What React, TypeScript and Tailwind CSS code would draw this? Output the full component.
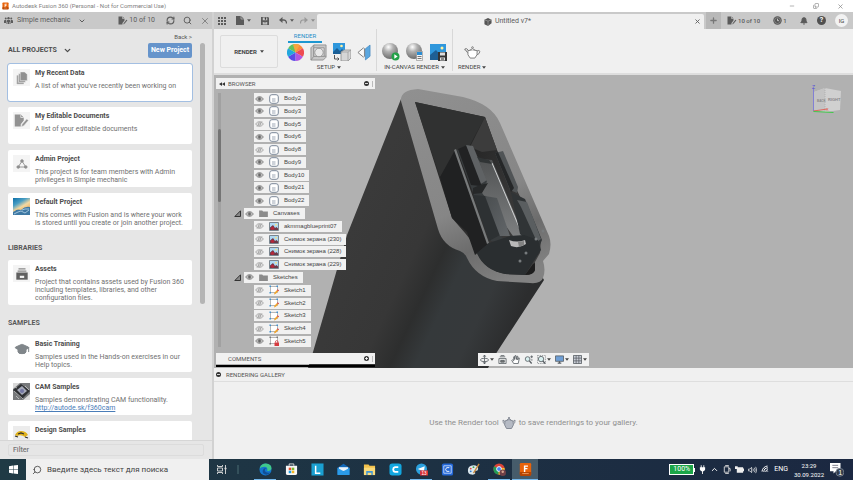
import React from 'react';
import clsx from 'clsx';
import {
  Bell, ChevronDown, ChevronUp, Copy as Restore, GraduationCap, Minus, Plus, RefreshCw, Search, Wifi, X,
} from 'lucide-react';

type IconProps = { className?: string };

const Caret = ({ className }: IconProps) => (
  <svg viewBox="0 0 6 4" className={clsx('w-1 h-[3px] shrink-0', className)}><path d="M0 0h6L3 4z" fill="currentColor" /></svg>
);

const PeopleIcon = () => (
  <svg viewBox="0 0 18 14" className="w-[9px] h-[7px]" fill="#5c5c5c">
    <circle cx="3.5" cy="3" r="2" /><circle cx="9" cy="2.5" r="2.4" /><circle cx="14.5" cy="3" r="2" />
    <path d="M0 12V8q0-2 2-2h2v6zM5 14V8q0-2 2-2h4q2 0 2 2v6h-2v-4h-1v4H8v-4H7v4zM14 12V6h2q2 0 2 2v4z" />
  </svg>
);

const EditDocIcon = ({ className }: IconProps) => (
  <svg viewBox="0 0 20 18" className={className}>
    <path d="M1 1h8l4 4v4l-4 5v3H1z" fill="currentColor" />
    <path d="M9 1v4h4" stroke="#eee" fill="none" strokeWidth="1" />
    <path d="M10 17l1-3 6-7 2 2-6 7z" fill="currentColor" stroke="#ddd" strokeWidth=".7" />
  </svg>
);

const ClockIcon = () => (
  <svg viewBox="0 0 10 10" className="w-[9px] h-[9px]">
    <circle cx="5" cy="5" r="4.700" fill="#555" /><circle cx="5" cy="5" r="3.300" fill="none" stroke="#aaa" strokeWidth=".6" />
    <path d="M5 3v2.200h1.700" stroke="#ddd" fill="none" strokeWidth=".9" />
  </svg>
);

const FusionIcon = ({ className }: IconProps) => (
  <svg viewBox="0 0 16 16" className={className}>
    <rect x="1" width="14" height="15" rx="1.5" fill="#e8630a" />
    <path d="M1 11h14v3q0 2-2 2H3q-2 0-2-2z" fill="#b54503" />
    <path d="M6 3h5v1.6H7.8v1.6h2.6v1.6H7.8V11H6z" fill="#fff" />
    <path d="M4 13h8" stroke="#f7a669" />
  </svg>
);

const CopyDocsIcon = () => (
  <svg viewBox="0 0 16 16" className="w-[14px] h-[14px]">
    <path d="M2 5h8v10H2z" fill="#a3a3a3" />
    <path d="M4 3h8v10H4z" fill="#9a9a9a" stroke="#f4f4f4" strokeWidth=".6" />
    <path d="M6 1h5l3 3v7H6z" fill="#909090" stroke="#f4f4f4" strokeWidth=".6" />
  </svg>
);

const ShareIcon = () => (
  <svg viewBox="0 0 16 16" className="w-3 h-3" fill="none" stroke="#8e8e8e">
    <path d="M8 4L3 12h10z" strokeWidth="1.2" />
    <g fill="#8e8e8e"><circle cx="8" cy="4" r="1.8" /><circle cx="3" cy="12" r="1.8" /><circle cx="13" cy="12" r="1.8" /></g>
  </svg>
);

const PhotoThumb = () => (
  <svg viewBox="0 0 17 17" className="w-[17px] h-[17px]">
    <defs>
      <linearGradient id="sky" x1="0" y1="0" x2=".6" y2="1">
        <stop offset="0" stopColor="#0d6fa8" /><stop offset=".35" stopColor="#4a9fc4" /><stop offset=".6" stopColor="#f2d8a2" /><stop offset="1" stopColor="#e9a24b" />
      </linearGradient>
    </defs>
    <rect width="17" height="17" fill="url(#sky)" />
    <path d="M0 14Q4 10 8 12Q12 8 17 9v8H0z" fill="#3e78a3" />
    <path d="M1 16l4-2 3-1 4 2 4-3M9 12l3-1 4 0" fill="none" stroke="#a9cbe2" strokeWidth=".9" />
    <path d="M1 13l3-2 3 0 3-2" stroke="#f3cb86" fill="none" />
  </svg>
);

const ArchiveIcon = () => (
  <svg viewBox="0 0 16 16" className="w-[14px] h-[14px]" fill="#5f5f5f">
    <path d="M4 1.500h8v1.300H4zM3 4h10v1.300H3z" fill="#888" />
    <path d="M1.500 6.300h13v8.200h-13z" /><path d="M5.500 10h5v2.500h-5z" fill="#f2f2f2" />
  </svg>
);

const CamThumb = () => (
  <svg viewBox="0 0 17 17" className="w-[17px] h-[17px]">
    <rect width="17" height="17" fill="#77797b" />
    <path d="M0 0h7L0 6zM10 17l7-6v6z" fill="#d9d9d9" />
    <path d="M0 7l8-6 9 7-8 8z" fill="#2f3134" />
    <path d="M4 7l5-4 5 5-5 4z" fill="#a5a9b8" /><circle cx="9" cy="8" r="2" fill="#7377a3" />
    <path d="M1 8l9 8M3 13l3 3M12 3l4 4M2 4l2 1" stroke="#c9c9c9" strokeWidth=".8" />
  </svg>
);

const DesignThumb = () => (
  <svg viewBox="0 0 17 17" className="w-[17px] h-[17px]">
    <rect width="17" height="17" fill="#ececec" />
    <path d="M2 9q2-4 6-4 5 0 7 4l-3 2q-4-3-8-1z" fill="#e0b21b" />
    <path d="M5 8l3-1 3 1M2 10l3 1M12 11l3 1" stroke="#2f2f2f" strokeWidth="1.200" fill="none" />
  </svg>
);

interface Project {
  title: string;
  lines: string[];
  icon: React.ReactNode;
  link?: string;
  selected?: boolean;
}

const projects: Project[] = [
  { title: 'My Recent Data', lines: ["A list of what you've recently been working on"], icon: <CopyDocsIcon />, selected: true },
  { title: 'My Editable Documents', lines: ['A list of your editable documents'], icon: <EditDocIcon className="w-[15px] h-[15px] text-[#929292]" /> },
  { title: 'Admin Project', lines: ['This project is for team members with Admin', 'privileges in Simple mechanic'], icon: <ShareIcon /> },
  { title: 'Default Project', lines: ['This comes with Fusion and is where your work', 'is stored until you create or join another project.'], icon: <PhotoThumb /> },
];

const libraries: Project[] = [
  { title: 'Assets', lines: ['Project that contains assets used by Fusion 360', 'including templates, libraries, and other', 'configuration files.'], icon: <ArchiveIcon /> },
];

const samples: Project[] = [
  { title: 'Basic Training', lines: ['Samples used in the Hands-on exercises in our', 'Help topics.'], icon: <GraduationCap className="w-4 h-4 text-[#80868a]" fill="#80868a" strokeWidth={1.5} /> },
  { title: 'CAM Samples', lines: ['Samples demonstrating CAM functionality.'], link: 'http://autode.sk/f360cam', icon: <CamThumb /> },
  { title: 'Design Samples', lines: [], icon: <DesignThumb /> },
];

const ProjectCard = ({ title, lines, icon, link, selected }: Project) => (
  <li className={clsx('flex items-start gap-[5px] min-h-[37px] pl-[5px] pt-[5px] pb-[3px] bg-white rounded-xs', selected && 'outline outline-[#a3bfe2]')}>
    <span className={clsx('w-[17px] h-[17px] shrink-0 flex items-center justify-center', title !== 'Basic Training' && 'bg-[#f4f4f4]')}>{icon}</span>
    <div className="min-w-0 leading-[8px] whitespace-nowrap">
      <h3 className="font-bold text-[#4c4c4c]">{title}</h3>
      <div className="mt-[5px] text-[#707070]">
        {lines.map((line) => <p key={line}>{line}</p>)}
        {link && <a href={link} className="underline text-[#4a7db8]">{link}</a>}
      </div>
    </div>
  </li>
);

const CardList = ({ items }: { items: Project[] }) => (
  <ul className="flex flex-col gap-[6px]">{items.map((p) => <ProjectCard key={p.title} {...p} />)}</ul>
);

const SectionTitle = ({ children }: { children: React.ReactNode }) => (
  <h2 className="mt-[14px] mb-[7px] leading-[9px] font-bold text-[#585858]">{children}</h2>
);

const DataPanel = () => (
  <aside className="w-[212px] shrink-0 flex flex-col min-h-0 bg-[#e6e6e6] font-[Roboto,sans-serif] text-[7px]">
    <header className="h-[17px] shrink-0 flex items-center pl-1 pr-[2px] bg-[#c9c9c9] text-[#5c5c5c]">
      <button className="flex items-center gap-1"><PeopleIcon />Simple mechanic<ChevronDown className="ml-[3px] w-2 h-2" strokeWidth={3} /></button>
      <span className="ml-auto flex items-center gap-px"><EditDocIcon className="w-[10px] h-[9px]" />10 of 10</span>
      <button aria-label="Refresh" className="ml-[11px]"><RefreshCw className="w-[9px] h-[9px]" strokeWidth={3} /></button>
      <button aria-label="Search" className="ml-2"><Search className="w-[9px] h-[9px]" strokeWidth={2.5} /></button>
      <button aria-label="Close panel" className="ml-2"><X className="w-[10px] h-[10px]" strokeWidth={1.5} /></button>
    </header>
    <div className="flex-1 min-h-0 flex overflow-hidden border-b border-[#d6d6d6]">
      <div className="flex-1 pl-2">
        <div className="h-[14px] flex items-center justify-end"><button className="text-[6px] text-[#555]">Back &gt;</button></div>
        <div className="h-[15px] mb-[6px] flex items-center">
          <button className="flex items-center gap-[6px] text-[7px] font-bold text-[#4c4c4c]">ALL PROJECTS<ChevronDown className="w-[9px] h-[9px]" strokeWidth={3.5} /></button>
          <button className="ml-auto w-[44px] h-[15px] rounded-xs bg-[#6694cb] text-white text-[7px] font-bold">New Project</button>
        </div>
        <CardList items={projects} />
        <SectionTitle>LIBRARIES</SectionTitle>
        <CardList items={libraries} />
        <SectionTitle>SAMPLES</SectionTitle>
        <CardList items={samples} />
      </div>
      <div className="w-5 pt-[14px] pl-2"><div className="w-[5px] h-[261px] rounded-full bg-[#b4b4b4]" /></div>
    </div>
    <div className="h-[18px] shrink-0 pl-2 pr-2 pt-[3px]">
      <input aria-label="Filter" placeholder="Filter" className="block w-full h-3 px-1 rounded-xs border border-[#dcdcdc] font-medium text-[7px] placeholder:text-[#757575]" />
    </div>
  </aside>
);

const TopTabs = () => (
  <div className="h-[17px] shrink-0 flex bg-[#c9c9c9] text-[#5a5a5a]">
    <div className="w-[103px] shrink-0 flex items-center pl-1 gap-[10px]">
      <button aria-label="Apps">
        <svg viewBox="0 0 8 8" className="w-2 h-2" fill="#5a5a5a"><path d="M0 0h2v2H0zM3 0h2v2H3zM6 0h2v2H6zM0 3h2v2H0zM3 3h2v2H3zM6 3h2v2H6zM0 6h2v2H0zM3 6h2v2H3zM6 6h2v2H6z" /></svg>
      </button>
      <button aria-label="File" className="flex items-center gap-[3px]">
        <svg viewBox="0 0 8 9" className="w-2 h-[9px]"><path d="M0 0h5l3 3v6H0z" fill="#5a5a5a" /><path d="M5 0v3h3" stroke="#ccc" fill="none" strokeWidth=".6" /></svg><Caret />
      </button>
      <button aria-label="Save">
        <svg viewBox="0 0 9 9" className="w-2 h-2"><path d="M0 0h8l1 1v8H0z" fill="#5a5a5a" /><path d="M2 .6h5v3H2zM2 5.500h5v3H2z" fill="#c9c9c9" /><path d="M3 6.500h3M4.500.8h1v2h-1z" stroke="#5a5a5a" strokeWidth=".7" /></svg>
      </button>
      <button aria-label="Undo" className="flex items-center gap-[3px]">
        <svg viewBox="0 0 8 7" className="w-2 h-[7px]"><path d="M1 3h4q2.500 0 2.500 3.500" stroke="#5a5a5a" fill="none" strokeWidth="1.300" /><path d="M3.500 0v6L0 3z" fill="#5a5a5a" /></svg><Caret />
      </button>
      <button aria-label="Redo" className="-ml-1 flex items-center gap-[3px] text-[#8c8c8c]">
        <svg viewBox="0 0 8 7" className="w-2 h-[7px]"><path d="M7 3H3Q.5 3 .5 6.500" stroke="#999" fill="none" strokeWidth="1.200" /><path d="M4.500 0v6L8 3z" fill="#999" /></svg><Caret />
      </button>
    </div>
    <div className="flex-1 flex items-center mt-[2px] bg-[#f0f0f0] rounded-t-xs">
      <span className="flex-1 flex items-center justify-center gap-[3px] pl-1 text-[7px] font-[Roboto,sans-serif]">
        <svg viewBox="0 0 8 9" className="w-2 h-2"><path d="M0 2l4-2 4 2v4L4 9 0 7z" fill="#555" /><path d="M0 2l4 1.500V9M4 3.500L8 2" stroke="#aaa" fill="none" strokeWidth=".7" /></svg>
        Untitled v7*
      </span>
      <button aria-label="Close tab" className="mr-[3px]"><X className="w-[7px] h-[7px]" strokeWidth={3} /></button>
    </div>
    <div className="w-[149px] shrink-0 flex items-center pl-[2px] font-[Roboto,sans-serif] text-[6px]">
      <button aria-label="New tab" className="w-[15px] h-full flex items-center justify-center bg-[#b8b8b8]"><Plus className="w-[9px] h-[9px] text-[#777]" strokeWidth={3.5} /></button>
      <span className="ml-[6px] flex items-center gap-px font-medium"><EditDocIcon className="w-[10px] h-[9px]" />10 of 10</span>
      <span className="ml-[13px] flex items-center gap-px font-medium"><ClockIcon />1</span>
      <div className="ml-auto mr-[5px] flex items-center gap-[9px]">
        <button aria-label="Notifications"><Bell className="w-2 h-2" fill="currentColor" strokeWidth={3} /></button>
        <button aria-label="Help" className="w-[9px] h-[9px] rounded-full bg-[#505050] text-white text-[7px] leading-[9px] font-bold">?</button>
        <button className="w-[13px] h-[13px] rounded-full bg-[#f2f2f2] text-[6px] leading-[13px] text-[#444]">IG</button>
      </div>
    </div>
  </div>
);

const ColorWheel = () => (
  <svg viewBox="-10 -10 20 20" className="w-[17px] h-[17px]">
    <path d="M0 0L0-10A10 10 0 0 1 8.700-5z" fill="#fb8a3c" /><path d="M0 0L8.700-5A10 10 0 0 1 8.700 5z" fill="#ee4b52" />
    <path d="M0 0L8.700 5A10 10 0 0 1 0 10z" fill="#b355e0" /><path d="M0 0L0 10A10 10 0 0 1-8.700 5z" fill="#5a4be6" />
    <path d="M0 0L-8.700 5A10 10 0 0 1-8.700-5z" fill="#23a7dd" /><path d="M0 0L-8.700-5A10 10 0 0 1 0-10z" fill="#62c35c" />
    <path d="M0 0L-3-9.500A10 10 0 0 1 5-8.700z" fill="#f6a53f" />
  </svg>
);

const SceneIcon = () => (
  <svg viewBox="0 0 18 18" className="w-[17px] h-[17px]" stroke="#8c8c8c" strokeWidth=".9">
    <path d="M1 4l3-3h13v13l-3 3H1z" fill="#c8c8c8" /><path d="M4 1v12l-3 4M4 13h13" fill="none" /><path d="M4 4h11v9H4z" fill="#e0e0e0" />
    <circle cx="9.500" cy="9" r="4.500" fill="#e8e8e8" />
  </svg>
);

const DecalIcon = () => (
  <svg viewBox="0 0 18 18" className="w-[18px] h-[18px]">
    <path d="M0 0h12v11H0z" fill="#2f97dc" /><path d="M0 9l4-4 3 3 2-2 3 3v2H0z" fill="#1b5f96" /><circle cx="8.500" cy="3" r="1.300" fill="#fff2a0" />
    <path d="M8 9l3-2h7v8l-3 3H8z" fill="#d6d6d6" stroke="#8b8b8b" strokeWidth=".8" /><path d="M8 9h7v9M15 9l3-2" stroke="#999" fill="none" strokeWidth=".7" />
    <path d="M1.500 12v4H6M4.500 14.500L6 16l-1.500 1.500" stroke="#555" fill="none" />
  </svg>
);

const TextureIcon = () => (
  <svg viewBox="0 0 15 18" className="w-[14px] h-[17px]">
    <path d="M1 9l6-5 1 1v8l-1 1z" fill="#fafafa" stroke="#7a7a7a" /><path d="M9 5l5-4v12l-5 4z" fill="#5aa7e0" stroke="#3f84bd" strokeWidth=".7" />
  </svg>
);

const Sphere = ({ children }: { children: React.ReactNode }) => (
  <svg viewBox="0 0 18 18" className="w-[18px] h-[18px]">
    <defs><radialGradient id="ball" cx=".4" cy=".25" r=".75"><stop offset="0" stopColor="#fff" /><stop offset=".4" stopColor="#b0b0b0" /><stop offset="1" stopColor="#6c6c6c" /></radialGradient></defs>
    <circle cx="8" cy="8" r="8" fill="url(#ball)" />{children}
  </svg>
);

const CaptureIcon = () => (
  <svg viewBox="0 0 17 18" className="w-[17px] h-[18px]">
    <path d="M0 1h16v16H0z" fill="#2f97dc" /><path d="M0 12l6-5 5 6v4H0z" fill="#1e5f94" /><circle cx="12" cy="5" r="1.500" fill="#fff2a0" />
    <path d="M8 9h9v9H8z" fill="#333" /><path d="M10 9.500h5v3h-5zM10 14.500h5v3h-5z" fill="#ddd" /><path d="M11 16h3" stroke="#333" />
  </svg>
);

const TeapotIcon = () => (
  <svg viewBox="0 0 18 14" className="w-[17px] h-[13px]" fill="#fff" stroke="#777" strokeWidth="1">
    <path d="M5 8Q2.500 7 2 4.500L.7 4.300 1 3h2l2 2.500" /><path d="M13.500 5.500q3-1.500 3.500.3 0 2.700-4 4.200" fill="none" />
    <path d="M4 5q5-1.500 10 0 1 5-2.500 8h-5Q3 10 4 5z" /><path d="M6 4.500q3-3 6 0" /><circle cx="9" cy="1.700" r=".9" />
  </svg>
);

const ToolGroup = ({ label, children }: { label: string; children: React.ReactNode }) => (
  <div className="flex flex-col items-center pt-[13px] px-[5px]">
    <div className="h-5 flex items-center gap-[6px]">{children}</div>
    <button className="flex items-center gap-[2px] font-[Roboto,sans-serif] text-[6px] leading-[10px] text-[#444]">{label}<Caret /></button>
  </div>
);

const Toolbar = () => (
  <div className="h-[46px] shrink-0 flex bg-[#f0f0f0] border-b-2 border-[#dedede]">
    <button className="ml-[6px] mt-[6px] w-[58px] h-[33px] rounded-xs border border-[#dcdcdc] flex items-center justify-center gap-[3px] font-[Roboto,sans-serif] text-[6px] font-bold text-[#444]">RENDER<Caret /></button>
    <div className="relative ml-[4px] border-r border-[#d8d8d8] h-[42px]">
      <button className="absolute left-[6px] top-[2px] w-[34px] border-b-2 border-[#1d97d1] font-[Roboto,sans-serif] text-[6px] leading-[10px] text-[#1d8fc9]">RENDER</button>
      <ToolGroup label="SETUP"><ColorWheel /><SceneIcon /><DecalIcon /><TextureIcon /></ToolGroup>
    </div>
    <div className="border-r border-[#d8d8d8] h-[42px]">
      <ToolGroup label="IN-CANVAS RENDER">
        <Sphere><circle cx="13.500" cy="13.500" r="4" fill="#24a148" /><path d="M12.300 11.300v4.400l3.400-2.200z" fill="#fff" /></Sphere>
        <Sphere><path d="M10.500 8.500h6v9h-6z" fill="#f5f5f5" stroke="#888" strokeWidth=".6" /><path d="M11 9h5v3h-5z" fill="#2b8ed4" /><path d="M11.500 13.500h4M11.500 15.500h4" stroke="#555" strokeWidth=".8" /></Sphere>
        <CaptureIcon />
      </ToolGroup>
    </div>
    <ToolGroup label="RENDER"><TeapotIcon /></ToolGroup>
  </div>
);

const Model = () => (
  <svg viewBox="214 75 639 293" preserveAspectRatio="xMinYMin slice" className="absolute inset-0 w-full h-full">
    <defs>
      <linearGradient id="side" gradientUnits="userSpaceOnUse" x1="350" y1="230" x2="520" y2="310">
        <stop offset="0" stopColor="#3a3a3a" /><stop offset=".36" stopColor="#373737" /><stop offset=".5" stopColor="#2d2e2e" /><stop offset=".62" stopColor="#35393b" /><stop offset=".82" stopColor="#36393b" /><stop offset="1" stopColor="#2c2d2e" />
      </linearGradient>
      <linearGradient id="rim" gradientUnits="userSpaceOnUse" x1="410" y1="90" x2="500" y2="285"><stop offset="0" stopColor="#909090" /><stop offset=".6" stopColor="#868686" /><stop offset=".8" stopColor="#6c6c6c" /><stop offset="1" stopColor="#828282" /></linearGradient>
      <linearGradient id="hole" x1="0" y1="0" x2="1" y2=".6"><stop offset="0" stopColor="#353535" /><stop offset=".45" stopColor="#262626" /><stop offset="1" stopColor="#404040" /></linearGradient>
      <linearGradient id="plate" x1="0" y1="0" x2="0" y2="1"><stop offset="0" stopColor="#505253" /><stop offset="1" stopColor="#7d7f80" /></linearGradient>
      <linearGradient id="block" x1="0" y1="0" x2="1" y2="1"><stop offset="0" stopColor="#4a4e50" /><stop offset="1" stopColor="#63676a" /></linearGradient>
    </defs>
    <path d="M401 99L347 235L313 352L308 368H488L497 352L544 280L500 200L425 98z" fill="url(#side)" />
    <path d="M401 101Q400 90 418 89L463 97Q492 104 500 123L549 236Q552 244 549 254L543 261Q546 270 543 278Q541 284 530 283L497 281Q476 277 467 258Q465 253 460 251Q443 246 438 229z" fill="url(#rim)" />
    <path d="M415 102L485 117L497 150L541 239L540 253L535 262L535 270Q533 275 525 275L505 274Q484 270 477 253Q473 242 465 233L452 218z" fill="url(#hole)" />
    <path d="M415 102L485 117L470 145L440 177z" fill="#303131" />
    <path d="M485 117L497 150L482 152L470 147z" fill="#3c3c3c" />
    <path d="M455 150L440 177L452 218L467 232L475 255L488 244z" fill="#202122" />
    <path d="M457 150L467 145L488 180L486 196L505 244L491 241z" fill="#383c3e" />
    <path d="M454 150L456 149L489 243L487 244z" fill="#777a7b" />
    <path d="M458 149L467 145L485 180L480 186L471 185z" fill="#212223" />
    <path d="M466 145L473 146L487 180L481 184z" fill="#5f6264" />
    <path d="M478 159L492 160L524 236L513 236L480 190L487 182z" fill="url(#plate)" />
    <path d="M492 163L522 234" stroke="#d0d2d3" strokeWidth="1" />
    <path d="M477 157L489 160L492 164L480 162z" fill="#303435" />
    <path d="M473 195L486 196L500 235L489 241z" fill="#2d3133" />
    <path d="M485 196L497 198L510 236L500 236z" fill="url(#block)" />
    <path d="M473 188L480 185L488 183L482 193L473 194z" fill="#262829" />
    <path d="M495 153L503 151L518 187L517 193L510 190z" fill="#505456" />
    <path d="M495 153L498 152L514 188L511 192z" fill="#252728" />
    <path d="M511 192L525 199L542 240L538 249L520 234z" fill="#303436" />
    <path d="M517 200L527 202L541 239L537 242L521 207z" fill="#5a5e60" />
    <path d="M489 243L510 236L524 235L538 240L541 250L525 275L505 274Q484 270 477 253z" fill="#2a2e30" />
    <path d="M533 264L535 263V270Q534 275 525 275z" fill="#1d1d1d" />
    <path d="M509 240Q517 243 525 240L526 244Q519 249 511 246z" fill="#b9b9b9" /><path d="M518 242L524 241L524 245L519 247z" fill="#828282" />
    <g fill="#777b7d"><circle cx="520" cy="261" r="1.500" /><circle cx="526" cy="253" r="1.500" /><circle cx="536" cy="239" r="1.500" /><circle cx="543" cy="231" r="1.500" /></g>
  </svg>
);

const Eye = ({ off }: { off?: boolean }) => (
  <svg viewBox="0 0 16 10" className="w-[9px] h-[6px] shrink-0" fill="none" stroke={off ? '#a2a2a2' : '#808080'} strokeWidth="1.600">
    <path d="M1 5q7-8.500 14 0-7 8.500-14 0z" fill={off ? '#eee' : '#c9c9c9'} /><circle cx="8" cy="5" r="2.500" fill={off ? 'none' : '#666'} />
    {off && <path d="M3 9.500L13 .5" />}
  </svg>
);

const treeIcons = {
  body: (
    <svg viewBox="0 0 10 10" className="w-[10px] h-[10px]"><rect x=".7" y=".7" width="8.600" height="8.600" rx="2.200" fill="#fff" stroke="#7b8798" /><path d="M3 4h3.500v4H3z" fill="#ced3da" /></svg>
  ),
  canvas: (
    <svg viewBox="0 0 10 9" className="w-[10px] h-[9px]"><path d="M.5.5h9v8h-9z" fill="#aed7f2" stroke="#7b868f" /><circle cx="7" cy="2.700" r="1" fill="#f4e38b" /><path d="M1 8V5.500L4 3l2 3 1.500-1L9 6.500V8z" fill="#6b3a48" /><circle cx="3.500" cy="6.300" r="1.700" fill="#b3273a" /></svg>
  ),
  sketch: (
    <svg viewBox="0 0 10 10" className="w-[10px] h-[10px]"><path d="M1.500 1.500h7v6h-7z" fill="#fff" stroke="#9a9a9a" strokeWidth=".7" /><path d="M.5.5H2V2H.5zM7.500.5H9V2H7.500zM.5 7H2v1.500H.5z" fill="#3d8fd0" /><path d="M5 9.500l.6-2L8 5l1.300 1.200-2.500 2.500z" fill="#f0a52c" /><path d="M8 5l.7-.8L10 5.500l-.7.7z" fill="#d8323c" /></svg>
  ),
  locked: (
    <svg viewBox="0 0 10 10" className="w-[10px] h-[10px]"><path d="M1.500 1.500h7v6h-7z" fill="#fff" stroke="#9a9a9a" strokeWidth=".7" /><path d="M.5.5H2V2H.5zM7.500.5H9V2H7.500zM.5 7H2v1.500H.5z" fill="#777" /><path d="M5.500 6.500H10V10H5.500z" fill="#d63a3f" /><path d="M6.500 6.500V5.200q1.200-1.200 2.400 0v1.300" stroke="#d63a3f" fill="none" strokeWidth=".8" /></svg>
  ),
  folder: (
    <svg viewBox="0 0 10 8" className="w-[9px] h-[7px]"><path d="M0 .5h3.500l1 1.200H10V8H0z" fill="#8b8b8b" /></svg>
  ),
};

interface TreeNode { name: string; kind: keyof typeof treeIcons; off?: boolean }

const tree: TreeNode[] = [
  { name: 'Body2', kind: 'body' },
  { name: 'Body3', kind: 'body' },
  { name: 'Body5', kind: 'body', off: true },
  { name: 'Body6', kind: 'body' },
  { name: 'Body8', kind: 'body', off: true },
  { name: 'Body9', kind: 'body' },
  { name: 'Body10', kind: 'body' },
  { name: 'Body21', kind: 'body' },
  { name: 'Body22', kind: 'body' },
  { name: 'Canvases', kind: 'folder' },
  { name: 'akmmagblueprint07', kind: 'canvas', off: true },
  { name: 'Снимок экрана (230)', kind: 'canvas', off: true },
  { name: 'Снимок экрана (228)', kind: 'canvas', off: true },
  { name: 'Снимок экрана (229)', kind: 'canvas', off: true },
  { name: 'Sketches', kind: 'folder' },
  { name: 'Sketch1', kind: 'sketch', off: true },
  { name: 'Sketch2', kind: 'sketch', off: true },
  { name: 'Sketch3', kind: 'sketch', off: true },
  { name: 'Sketch4', kind: 'sketch', off: true },
  { name: 'Sketch5', kind: 'locked' },
];

const TreeRow = ({ name, kind, off }: TreeNode) => {
  const folder = kind === 'folder';
  return (
    <li className={clsx('flex items-center', folder ? 'pl-[13px]' : 'pl-[33px]')}>
      {folder && <svg viewBox="0 0 7 7" className="w-[7px] h-[7px] mr-[3px]"><path d="M6.500.8v5.700H.8z" fill="#888" stroke="#333" /></svg>}
      <div className="h-[11px] flex items-center pl-px pr-[5px] bg-[#f1f1f1] text-[6px] text-[#444] whitespace-nowrap">
        <Eye off={off} />
        <span className="mx-[4px] w-[11px] flex justify-center">{treeIcons[kind]}</span>
        <span className={clsx(!folder && 'pl-px')}>{name}</span>
      </div>
    </li>
  );
};

const PanelBar = ({ label, sign }: { label: string; sign: string }) => (
  <div className="w-[159px] h-[11px] shrink-0 flex items-center bg-[#f1f1f1] pl-[3px] font-[Roboto,sans-serif] text-[6px] text-[#555]">
    <svg viewBox="0 0 8 5" className={clsx('w-[6px] h-1 mr-[3px]', sign === '+' && 'invisible')}><path d="M4 0v5L0 2.500zM8 0v5L4 2.500z" fill="#333" /></svg>
    {label}
    <button aria-label={label} className="ml-auto mr-[3px] w-[5px] h-[5px] rounded-full bg-[#333] flex items-center justify-center">
      <svg viewBox="0 0 5 5" className="w-[5px] h-[5px]" stroke="#fff" strokeWidth=".8"><path d={sign === '+' ? 'M1 2.500h3M2.500 1v3' : 'M1 2.500h3'} /></svg>
    </button>
    <span className="w-px h-[6px] mr-[2px] bg-[#bbb]" />
  </div>
);

const ViewCube = () => (
  <svg viewBox="0 0 34 32" className="absolute right-[9px] top-[9px] w-[34px] h-8">
    <path d="M4 8l11-4 16 3-1 19-15 2-11-2z" fill="#d0d0d0" /><path d="M4 8l11-4v24L4 26z" fill="#c4c4c4" /><path d="M15 4v24" stroke="#aaa" strokeWidth=".7" strokeDasharray="1 1" />
    <path d="M3.500 4v23" stroke="#7d7ad8" strokeWidth=".9" /><path d="M3.500 27l14-2" stroke="#e05a50" strokeWidth=".9" /><path d="M3.500 27.500l20 1" stroke="#41c94a" />
    <text x="2" y="5" fontSize="5" fill="#5854d6" fontFamily="Liberation Sans, sans-serif">Z</text>
    <text x="7" y="18" fontSize="3" fontWeight="700" fill="#888" fontFamily="Liberation Sans, sans-serif">BACK</text>
    <text x="18" y="17" fontSize="4" fontWeight="700" fill="#888" fontFamily="Liberation Sans, sans-serif">RIGHT</text>
    <text x="16" y="27" fontSize="4" fill="#e05a50" fontFamily="Liberation Sans, sans-serif">X</text>
  </svg>
);

const navIcons: { label: string; menu?: boolean; art: React.ReactNode }[] = [
  { label: 'Orbit', menu: true, art: <><path d="M5 0v10M3.500 2L5 0l1.500 2M3.500 8L5 10l1.500-2" /><ellipse cx="5" cy="5.500" rx="4.500" ry="1.900" /></> },
  { label: 'Look at', art: <><path d="M1 4h8v5.500H1zM2 2h6M3 .5h4" /><path d="M3 6h4v2H3z" fill="#777" /></> },
  { label: 'Pan', art: <path d="M3 9.500L.8 6l.8-.6L3 6.500V2l1-.2V5L4.500.7h1L6 5l.6-3.800 1 .3L7.400 5.500 8.500 3l.8.4L8 9.500z" fill="#fff" /> },
  { label: 'Zoom', art: <><circle cx="4" cy="4.500" r="2.600" fill="#d8efef" /><path d="M6 6.500L8.500 9.500" strokeWidth="1.500" /><path d="M7 2h3M8.500.5v3M7.500 5.500h2" /></> },
  { label: 'Fit', menu: true, art: <><path d="M.5.5h9v9h-9z" strokeDasharray="1.500 1" strokeWidth=".6" /><circle cx="4.500" cy="4.500" r="3" fill="#d8efef" /><path d="M6.500 6.500L9 9.500" strokeWidth="1.500" /></> },
  { label: 'Display settings', menu: true, art: <><path d="M.5 1h9v6h-9z" fill="#6f9fd6" /><path d="M3 9h4M5 7v2" strokeWidth="1.300" /></> },
  { label: 'Grid', menu: true, art: <><path d="M.5.5h9v9h-9z" fill="#c9cdd6" /><path d="M3.500.5v9M6.500.5v9M.5 3.500h9M.5 6.500h9" strokeWidth=".8" /></> },
];

const NavBar = () => (
  <div className="absolute left-[264px] bottom-[2px] h-[13px] px-[2px] flex items-center gap-[4px] bg-[#f1f1f1] text-[#444]">
    {navIcons.map(({ label, menu, art }) => (
      <button key={label} aria-label={label} className="flex items-center gap-px">
        <svg viewBox="0 0 10 10" className="w-[9px] h-[9px]" fill="none" stroke="#555b60" strokeWidth=".9">{art}</svg>
        {menu && <Caret />}
      </button>
    ))}
  </div>
);

const Viewport = () => (
  <section className="relative flex-1 min-h-0 overflow-hidden flex bg-[#b1b1b1]">
    <Model />
    <div className="relative flex-1 flex flex-col pt-[3px] pl-[2px]">
      <PanelBar label="BROWSER" sign="-" />
      <div className="flex-1 min-h-0 flex mt-1 mb-[6px]">
        <div className="w-[3px] ml-[2px] bg-[#a1a1a1]"><div className="mt-9 h-[73px] rounded-full bg-[#747474]" /></div>
        <ul className="flex-1 flex flex-col justify-between">{tree.map((n) => <TreeRow key={n.name} {...n} />)}</ul>
      </div>
      <PanelBar label="COMMENTS" sign="+" />
      <div className="w-[159px] h-[2px] mt-px mb-px bg-black" />
    </div>
    <ViewCube />
    <NavBar />
  </section>
);

const Gallery = () => (
  <section className="h-[91px] shrink-0 flex flex-col bg-[#f0f0f0] font-[Roboto,sans-serif]">
    <h2 className="h-[14px] shrink-0 flex items-center gap-[5px] pl-[2px] border-b border-[#dedede] text-[6px] text-[#555]">
      <svg viewBox="0 0 5 5" className="w-[5px] h-[5px]"><circle cx="2.500" cy="2.500" r="2.500" fill="#333" /><path d="M1 2.500h3" stroke="#fff" strokeWidth=".8" /></svg>
      RENDERING GALLERY
    </h2>
    <p className="flex-1 flex items-center justify-center gap-[3px] pt-1 text-[8px] text-[#8f8f8f]">
      Use the Render tool
      <svg viewBox="0 0 14 12" className="w-[14px] h-3" fill="#b5bac4" stroke="#858b96"><path d="M3 4.500L1 3q-.8 3 2.500 5M11 4.500L13 3q.8 3-2.500 5" fill="none" /><path d="M3 4q4-3 8 0 1.500 4-1.500 7.500h-5Q1.500 8 3 4z" /><path d="M5 2.800Q7 1 9 2.800" fill="#dde0e6" /><circle cx="7" cy="1" r=".7" /></svg>
      to save renderings to your gallery.
    </p>
  </section>
);

const taskApps: { name: string; running?: boolean; art: React.ReactNode }[] = [
  { name: 'Edge', running: true, art: <><circle cx="7" cy="7" r="6.500" fill="#1477cf" /><path d="M.7 6Q2 .5 7.500.5 13.500 1 13.500 6q-.5 3-4.500 2.500Q9.500 4 6 4 2 4 .7 6z" fill="#3fc98b" /><path d="M8.500 5.500q-3 .5-2 3.500 1.500 2.500 6 1-2 3-5.500 2.500-3.500-1-3-4.500 1-3 4.500-2.500z" fill="#103f7c" opacity=".7" /></> },
  { name: 'Store', art: <><path d="M1 3h12v8q0 2-2 2H3q-2 0-2-2z" fill="#f7f7f7" /><path d="M4.500 3V1h5v2" stroke="#ddd" fill="none" /><path d="M4 5h2.700v2.700H4z" fill="#e8502b" /><path d="M7.300 5H10v2.700H7.300z" fill="#7cb82f" /><path d="M4 8.300h2.700V11H4z" fill="#1e9de3" /><path d="M7.300 8.300H10V11H7.300z" fill="#f6b51e" /></> },
  { name: 'L', art: <><path d="M.5.5h13v13H.5z" fill="#1aa0d2" /><path d="M5 3v8h5" stroke="#fff" strokeWidth="1.600" fill="none" /></> },
  { name: 'Mail', art: <><path d="M.5 5L7 .8 13.500 5v7.500H.5z" fill="#1268b8" /><path d="M2 4.500h10v4H2z" fill="#eaf5fc" /><path d="M.5 5L7 9l6.500-4v8H.5z" fill="#2b9be8" /></> },
  { name: 'Explorer', art: <><path d="M1 1.500h5l1 1.500h6v9H1z" fill="#f2c14b" /><path d="M1 5h12v8H1z" fill="#fbdb7a" /><path d="M3.500 8.500h7V13H9v-2.500H5V13H3.500z" fill="#3e97d8" /></> },
  { name: 'C', art: <><rect x=".5" y=".5" width="13" height="13" rx="3" fill="#13a7e0" /><path d="M10 4.500H6.500Q4.500 5 4.500 7t2 2.500H10" stroke="#fff" strokeWidth="2" fill="none" /></> },
  { name: 'Telegram', running: true, art: <><circle cx="7" cy="6.500" r="6" fill="#2ba1de" /><path d="M3 6.500L10.500 3.500 9.500 9.500 7 8z" fill="#fff" /><path d="M5.500 8H14v5.500H5.500z" fill="#dd2e32" /><text x="7" y="12.500" fontSize="5" fill="#fff" fontFamily="Liberation Sans, sans-serif">13</text></> },
  { name: 'CCleaner', art: <><rect x="1" y=".5" width="12" height="13" rx="2" fill="#2468d8" /><path d="M3 3h8v8H3z" fill="none" stroke="#cfe0fa" strokeWidth=".9" /><path d="M9 5H6.500Q5 5.500 5 7t1.500 2H9" stroke="#fff" fill="none" /></> },
  { name: 'Paint', art: <><path d="M1 8Q1 3 7 2.500q5 0 5 4 0 2-3 2-1 1 0 2.500-1 2-4 1.500Q1 12 1 8z" fill="#dbe8ee" /><circle cx="4" cy="6" r="1" fill="#e04b3a" /><circle cx="7" cy="4.500" r="1" fill="#43a047" /><circle cx="4" cy="9" r="1" fill="#2d7dd2" /><path d="M7 11l6-10" stroke="#c7873c" strokeWidth="1.500" /></> },
  { name: 'Chrome', running: true, art: <><circle cx="6.500" cy="6.500" r="6" fill="#db4437" /><path d="M6.500 6.500L1.200 3.600A6 6 0 0 0 6 12.500z" fill="#1f9d57" /><path d="M6.500 6.500l-.5 6A6 6 0 0 0 12.300 5z" fill="#f9c82f" /><circle cx="6.500" cy="6.500" r="2.600" fill="#4285f4" stroke="#fff" /><circle cx="10.500" cy="10.500" r="3.500" fill="#704048" /><circle cx="10.500" cy="9.500" r="1.300" fill="#d8a58f" /></> },
];

const Taskbar = () => (
  <footer className="h-[21px] shrink-0 flex items-stretch bg-linear-to-r from-[#1f3a45] to-[#1b2841] font-[Roboto,sans-serif] text-white">
    <button aria-label="Start" className="w-[26px] flex items-center justify-center">
      <svg viewBox="0 0 9 9" className="w-[9px] h-[9px]" fill="#fff"><path d="M0 1.200l4-.6v3.700H0zM4.500.5L9 0v4.300H4.500zM0 4.800h4v3.600l-4-.6zM4.500 4.800H9V9l-4.500-.5z" /></svg>
    </button>
    <label className="w-[183px] flex items-center gap-[5px] pl-[6px] bg-[#f0f0f0] text-[#444]">
      <Search className="w-[10px] h-[10px] shrink-0 -scale-x-100" strokeWidth={2} />
      <input aria-label="Поиск" placeholder="Введите здесь текст для поиска" className="flex-1 min-w-0 text-[8px] placeholder:text-[#444]" />
    </label>
    <button aria-label="Task view" className="w-[26px] flex items-center justify-center">
      <svg viewBox="0 0 10 9" className="w-[10px] h-[9px]" stroke="#ddd" fill="none"><path d="M.5 0v1.500h5V0M.5 9V7.500h5V9M.5 3h5v3h-5zM8.500 0v9" strokeWidth=".9" /><path d="M7.500 3.500h2" strokeWidth="1.500" /></svg>
    </button>
    <div className="w-[17px] flex items-center"><span className="ml-[2px] w-[2px] h-[9px] bg-[#34505b]" /></div>
    {taskApps.map(({ name, running, art }) => (
      <button key={name} aria-label={name} className="w-[26px] px-[2px] flex flex-col items-center">
        <svg viewBox="0 0 14 14" className="w-[13px] h-[13px] my-auto">{art}</svg>
        <span className={clsx('w-full h-px', running && 'bg-[#76b9ed]')} />
      </button>
    ))}
    <button aria-label="Fusion" className="w-[26px] flex flex-col items-center bg-[#465c6b]">
      <FusionIcon className="w-[13px] h-[13px] my-auto" /><span className="w-full h-px bg-[#76b9ed]" />
    </button>
    <div className="ml-auto flex items-center pr-[9px] gap-[4px]">
      <span className="flex items-center"><span className="w-[25px] h-[11px] border border-white bg-[#1ba548] text-[7px] leading-[9px] text-center">100%</span><span className="w-px h-1 bg-white" /></span>
      <svg viewBox="0 0 8 10" className="w-[7px] h-[9px]" fill="#fff"><path d="M2 0h1v2.500h2V0h1v2.500h1V5Q6.500 7 4.500 7.200V10h-1V7.200Q1.500 7 1 5V2.500h1z" /></svg>
      <ChevronUp className="w-[9px] h-[9px]" strokeWidth={2.5} />
      <svg viewBox="0 0 8 10" className="w-2 h-[9px]" fill="none" stroke="#ddd"><path d="M1 2h5v6H1zM2 .5h4M2 9.500h4M6 4h1.500v3" /></svg>
      <svg viewBox="0 0 10 7" className="w-[9px] h-[7px]" fill="#eee"><path d="M2 1h7v1.500h1v3H9V7H2zM0 0h3v3H0z" /></svg>
      <svg viewBox="0 0 10 8" className="w-[9px] h-2" fill="none" stroke="#eee" strokeWidth=".8"><path d="M.5 3H2l2-2v6L2 5H.5zM5.500 2.500q1 1.500 0 3M7 1.500q2 2.500 0 5M8.500.5q2.500 3.500 0 7" /></svg>
      <Wifi className="w-[9px] h-[9px] -rotate-45" strokeWidth={2.5} />
      <span className="text-[7px]">ENG</span>
      <time className="w-[34px] text-center text-[6px] leading-[9px] whitespace-nowrap">23:29<br />30.09.2022</time>
      <button aria-label="Notifications">
        <svg viewBox="0 0 12 12" className="w-[14px] h-[14px]"><path d="M0 0h9v7H5L3 9V7H0z" fill="#fff" /><path d="M2 2h5M2 4h5" stroke="#667" strokeWidth=".7" /><circle cx="8.500" cy="8" r="3.400" fill="#333d4c" stroke="#8b95a3" strokeWidth=".6" /><text x="7" y="10" fontSize="6" fill="#fff" fontFamily="Liberation Sans, sans-serif">1</text></svg>
      </button>
    </div>
  </footer>
);

export default function App() {
  return (
    <div className="h-screen flex flex-col overflow-hidden bg-white">
      <header className="h-3 shrink-0 flex items-center gap-[3px] pl-[2px] pr-[9px] font-[Roboto,sans-serif] text-[6px] leading-[12px] text-[#808080]">
        <FusionIcon className="w-[7px] h-2" />
        <h1>Autodesk Fusion 360 (Personal - Not for Commercial Use)</h1>
        <div className="ml-auto flex items-center gap-[18px] text-[#888]">
          <button aria-label="Minimize"><Minus className="w-[6px] h-[6px]" strokeWidth={2.5} /></button>
          <button aria-label="Restore"><Restore className="w-[6px] h-[6px] -scale-y-100" strokeWidth={2.5} /></button>
          <button aria-label="Close"><X className="w-[7px] h-[7px]" strokeWidth={2.5} /></button>
        </div>
      </header>
      <div className="flex-1 min-h-0 flex">
        <DataPanel />
        <main className="flex-1 min-w-0 flex flex-col border-l-2 border-[#d2d2d2] font-['Liberation_Sans',sans-serif]">
          <TopTabs />
          <Toolbar />
          <Viewport />
          <Gallery />
        </main>
      </div>
      <Taskbar />
    </div>
  );
}
